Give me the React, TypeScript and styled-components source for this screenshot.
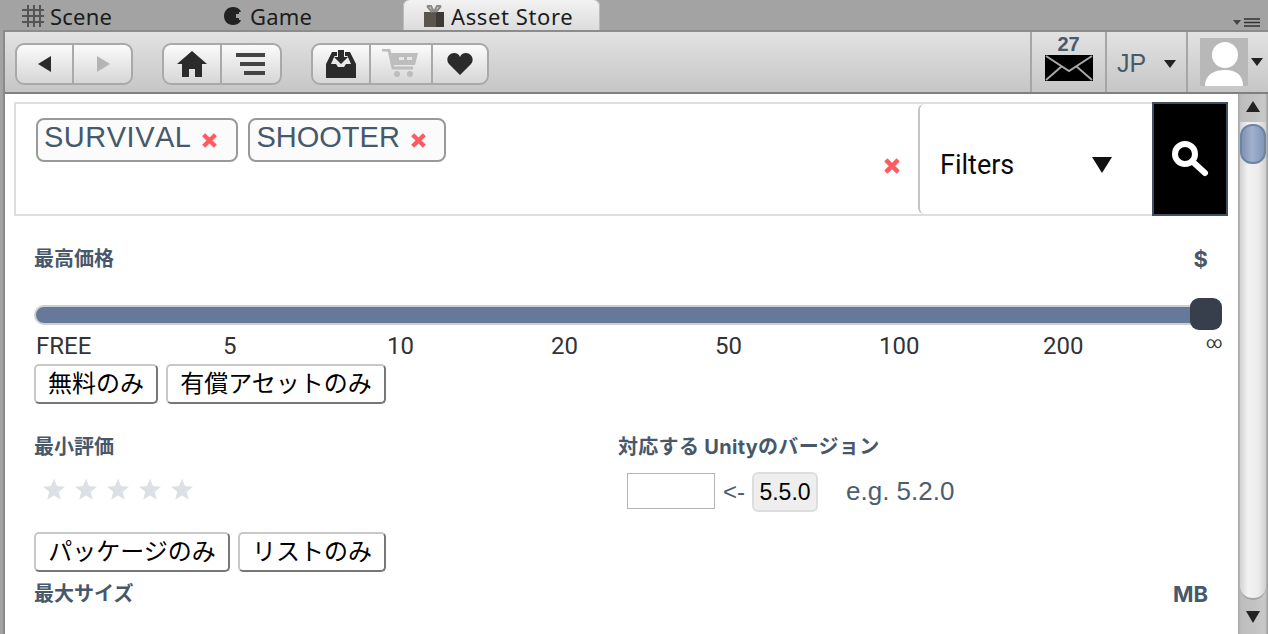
import styled, { createGlobalStyle } from "styled-components";

const Global = createGlobalStyle`
  html, body { margin: 0; padding: 0; }
  body { width: 1268px; height: 634px; overflow: hidden; background: #a3a3a3; font-family: "Roboto", "Noto Sans CJK JP", sans-serif; }
  * { box-sizing: border-box; }
`;

const Page = styled.div`
  width: 1268px;
  height: 634px;
  display: flex;
  flex-direction: column;
  overflow: hidden;
`;

const TabBar = styled.div`
  height: 30px;
  flex: none;
  display: flex;
  align-items: flex-end;
  position: relative;
  font-family: "Noto Sans", sans-serif;
  font-size: 22px;
  color: #1c1c1c;
`;

const Tab = styled.div<{ $w: number; $active?: boolean; $pad: number }>`
  width: ${(p) => p.$w}px;
  height: 30px;
  padding-left: ${(p) => p.$pad}px;
  display: flex;
  align-items: center;
  gap: 6px;
  letter-spacing: ${(p) => (p.$active ? 0.6 : 0.2)}px;
  padding-top: 2px;
  border-radius: 6px 6px 0 0;
  background: ${(p) => (p.$active ? "linear-gradient(#f2f2f2, #dcdcdc)" : "transparent")};
  box-shadow: ${(p) => (p.$active ? "inset 1px 0 #bbb, inset -1px 0 #bbb" : "none")};
`;

const TabMenu = styled.svg`
  position: absolute;
  right: 6px;
  top: 18px;
`;

const Window = styled.div`
  flex: 1;
  margin-left: 3px;
  display: flex;
  flex-direction: column;
  border-left: 2px solid #8a8a8a;
  min-height: 0;
`;

const Toolbar = styled.div`
  height: 64px;
  flex: none;
  display: flex;
  align-items: stretch;
  padding-left: 10px;
  background: linear-gradient(#e2e2e2, #c6c6c6);
  border-top: 2px solid #8c8c8c;
  border-bottom: 2px solid #808080;
`;

const ButtonGroup = styled.div<{ $gap: number }>`
  display: flex;
  height: 42px;
  margin-top: 11px;
  margin-right: ${(p) => p.$gap}px;
  border: 2px solid #a9a9a9;
  border-radius: 9px;
  background: linear-gradient(#fbfbfb, #d6d6d6);
`;

const ToolButton = styled.div<{ $w: number; $divider?: boolean }>`
  width: ${(p) => p.$w}px;
  display: flex;
  align-items: center;
  justify-content: center;
  border-right: ${(p) => (p.$divider ? "2px solid #a9a9a9" : "none")};
`;

const ToolbarRight = styled.div`
  margin-left: auto;
  display: flex;
  align-items: stretch;
  color: #48596c;
`;

const ToolCell = styled.div<{ $w: number }>`
  width: ${(p) => p.$w}px;
  border-left: 2px solid #a6a6a6;
  display: flex;
  align-items: center;
  justify-content: center;
  gap: 4px;
`;

const MailCell = styled(ToolCell)`
  flex-direction: column;
  gap: 2px;
  padding-bottom: 8px;
`;

const MailCount = styled.span`
  font: bold 20px/18px "Liberation Sans", sans-serif;
`;

const LangCell = styled(ToolCell)`
  padding-top: 3px;
`;

const Lang = styled.span`
  font: 25px "Liberation Sans", sans-serif;
  margin-right: 14px;
`;

const AvatarCell = styled(ToolCell)`
  justify-content: flex-start;
  padding-left: 12px;
  gap: 3px;
`;

const Avatar = styled.div`
  width: 48px;
  height: 48px;
  background: #b8b8b8;
  overflow: hidden;
`;

const Body = styled.div`
  flex: 1;
  display: flex;
  min-height: 0;
  background: #fff;
`;

const Content = styled.div`
  flex: 1;
  min-width: 0;
  padding: 8px 10px 0 9px;
  overflow: hidden;
`;

const SearchBar = styled.div`
  height: 114px;
  display: flex;
  border: 2px solid #dedede;
  border-right: none;
`;

const TagArea = styled.div`
  flex: 1;
  position: relative;
  display: flex;
  align-items: flex-start;
  gap: 10px;
  padding: 14px 0 0 20px;
`;

const Tag = styled.div<{ $spread?: number }>`
  height: 44px;
  padding: 0 0 6px 6px;
  display: flex;
  align-items: center;
  border: 2px solid #999;
  border-radius: 8px;
  background: #fbfbfb;
  color: #46586b;
  font: 29px "Liberation Sans", sans-serif;
  font-kerning: none;
  letter-spacing: ${(p) => p.$spread ?? 0}px;
`;

const TagClear = styled.div<{ $left: number; $right: number }>`
  margin: 7px ${(p) => p.$right}px 0 ${(p) => p.$left}px;
`;

const ClearAll = styled.div`
  position: absolute;
  right: 17px;
  top: 53px;
`;

const FilterSelect = styled.div`
  width: 234px;
  display: flex;
  align-items: center;
  justify-content: space-between;
  padding: 12px 40px 0 20px;
  border-left: 2px solid #c4c4c4;
  border-radius: 6px 0 0 6px;
  font-size: 27px;
  color: #0a0a0a;
`;

const SearchButton = styled.div`
  width: 76px;
  height: 114px;
  margin: -2px 0;
  display: flex;
  align-items: center;
  justify-content: center;
  background: #000;
  border: 2px solid #3f5163;
`;

const LabelRow = styled.div<{ $mt: number }>`
  margin-top: ${(p) => p.$mt}px;
  padding: 0 20px;
  display: flex;
  justify-content: space-between;
  height: 26px;
  line-height: 26px;
`;

const Label = styled.span`
  font: bold 20px/26px "Inter", "Noto Sans CJK JP", sans-serif;
  color: #47586b;
`;

const Unit = styled(Label)`
  font-size: 22px;
`;

const VersionLabel = styled(Label)`
  letter-spacing: 0.3px;
`;

const Slider = styled.div`
  position: relative;
  margin: 33px 6px 0 20px;
  height: 20px;
  border: 2px solid #cfcfcf;
  border-radius: 10px;
  background: #67799a;
`;

const Thumb = styled.div`
  position: absolute;
  right: -2px;
  top: -9px;
  width: 32px;
  height: 32px;
  border-radius: 9px;
  background: #373f4d;
`;

const Ticks = styled.div`
  display: flex;
  margin: 6px 0 0 22px;
  height: 30px;
  font-size: 24px;
  line-height: 30px;
  color: #333;
`;

const Tick = styled.span<{ $w: number }>`
  width: ${(p) => p.$w}px;
  flex: none;
`;

const InfinityTick = styled(Tick)`
  font-size: 16px;
  line-height: 24px;
`;

const ButtonRow = styled.div<{ $mt: number }>`
  display: flex;
  gap: 8px;
  margin: ${(p) => p.$mt}px 0 0 20px;
`;

const PlainButton = styled.div<{ $w: number }>`
  width: ${(p) => p.$w}px;
  height: 40px;
  padding-bottom: 5px;
  display: flex;
  align-items: center;
  justify-content: center;
  border: 2px solid;
  border-color: #c8c8c8 #777 #777 #c8c8c8;
  border-radius: 5px;
  font: 24px "Noto Sans CJK JP", sans-serif;
  color: #000;
  white-space: nowrap;
`;

const Columns = styled.div`
  display: flex;
  margin-top: 30px;
  height: 95px;
`;

const RatingColumn = styled.div`
  width: 604px;
  padding-left: 20px;
`;

const Stars = styled.div`
  display: flex;
  gap: 8px;
  margin: 17px 0 0 8px;
`;

const VersionColumn = styled.div`
  flex: 1;
`;

const VersionRow = styled.div`
  display: flex;
  align-items: center;
  margin: 12px 0 0 9px;
  color: #4b5d70;
  font: 24px "Liberation Sans", sans-serif;
`;

const VersionInput = styled.div`
  width: 88px;
  height: 36px;
  border: 1px solid #b5b5b5;
  margin: 0 8px 2px 0;
`;

const VersionChip = styled.div`
  width: 66px;
  height: 40px;
  margin: 0 28px 0 7px;
  display: flex;
  align-items: center;
  justify-content: center;
  background: #eee;
  border: 2px solid #ddd;
  border-radius: 6px;
  color: #000;
  font-size: 23px;
`;

const Example = styled.span`
  font-size: 26px;
  margin-bottom: 2px;
`;

const ScrollBar = styled.div`
  width: 30px;
  flex: none;
  position: relative;
  display: flex;
  flex-direction: column;
  align-items: center;
  background: linear-gradient(90deg, #a8a8a8, #bdbdbd 10%, #c8c8c8 90%, #9a9a9a);
`;

const ScrollArrow = styled.svg<{ $h: number }>`
  flex: none;
  height: ${(p) => p.$h}px;
`;

const ScrollTrack = styled.div`
  flex: 1;
  width: 26px;
  border-radius: 0 0 13px 13px;
  background: linear-gradient(90deg, #d2d2d2, #f2f2f2 30%, #ececec 70%, #d0d0d0);
  border-bottom: 2px solid #a4a4a4;
`;

const ScrollThumb = styled.div`
  position: absolute;
  left: 2px;
  top: 30px;
  width: 26px;
  height: 40px;
  border-radius: 12px;
  border: 2px solid #6f83a3;
  background: linear-gradient(90deg, #7f93b5, #a0b1cc 45%, #8296b8);
`;

const Cross = ({ size = 17 }: { size?: number }) => (
  <svg width={size} height={size} viewBox="0 0 16 16" style={{ display: "block" }}>
    <path d="M2.500 2.500 13.500 13.500M13.500 2.500 2.500 13.500" stroke="#ff5a5f" strokeWidth="4" />
  </svg>
);

const Star = () => (
  <svg width="24" height="24" viewBox="0 0 24 23" style={{ display: "block" }}>
    <path d="M12 1l3 7.600 8 .6-6.200 5.100 2 8-6.800-4.300-6.800 4.300 2-8L1 9.200l8-.6z" fill="#dde0e4" />
  </svg>
);

export default function App() {
  return (
    <Page>
      <Global />
      <TabBar>
        <Tab $w={216} $pad={22}>
          <svg width="22" height="22" viewBox="0 0 22 22">
            <path d="M6 0v22M12 0v22M18 0v22M0 5h22M0 11h22M0 17h22" stroke="#555" strokeWidth="2" />
          </svg>
          Scene
        </Tab>
        <Tab $w={187} $pad={8}>
          <svg width="20" height="18" viewBox="0 0 20 18">
            <path d="M9 0C3.500 0 0 4 0 9s3.500 9 9 9c3 0 5.500-1 7-3l1-2h-2v-2h-3V7h3V5h2l-1-2c-1.500-2-4-3-7-3z" fill="#222" />
          </svg>
          Game
        </Tab>
        <Tab $w={197} $pad={20} $active>
          <svg width="22" height="22" viewBox="0 0 22 22">
            <path d="M1 7h20v15H1z" fill="#5b5550" />
            <path d="M13 7h8v15h-8z" fill="#3e3a36" />
            <path d="M4 1l5 6M18 1l-5 6M4 1h4l3 6M18 1h-4l-3 6" fill="none" stroke="#8a8a8a" strokeWidth="2" />
          </svg>
          Asset Store
        </Tab>
        <TabMenu width="30" height="10" viewBox="0 0 30 10">
          <path d="M1 2h8l-4 5z" fill="#444" />
          <path d="M12 1h16M12 4.500h16M12 8h16" stroke="#333" strokeWidth="1.500" />
        </TabMenu>
      </TabBar>
      <Window>
        <Toolbar>
          <ButtonGroup $gap={29}>
            <ToolButton $w={57} $divider>
              <svg width="16" height="16" viewBox="0 0 16 16"><path d="M14 0v16L1 8z" fill="#2b2b2b" /></svg>
            </ToolButton>
            <ToolButton $w={57}>
              <svg width="16" height="16" viewBox="0 0 16 16"><path d="M2 0v16l13-8z" fill="#b4b4b4" /></svg>
            </ToolButton>
          </ButtonGroup>
          <ButtonGroup $gap={29}>
            <ToolButton $w={58} $divider>
              <svg width="30" height="26" viewBox="0 0 30 26">
                <path d="M15 0 0 13h5v13h7v-8h6v8h7V13h5z" fill="#2b2b2b" />
              </svg>
            </ToolButton>
            <ToolButton $w={58}>
              <svg width="30" height="22" viewBox="0 0 30 22">
                <path d="M0 2h29M4 11h25M8 20h21" stroke="#444" strokeWidth="4" />
              </svg>
            </ToolButton>
          </ButtonGroup>
          <ButtonGroup $gap={0}>
            <ToolButton $w={58} $divider>
              <svg width="30" height="28" viewBox="0 0 30 28">
                <path d="M0 14 6 2h5v4H8.500L5 14h5l2 3h6l2-3h5L21.500 6H19V2h5l6 12v14H0z" fill="#2b2b2b" />
                <path d="M12 0h6v7h4l-7 7-7-7h4z" fill="#2b2b2b" />
              </svg>
            </ToolButton>
            <ToolButton $w={62} $divider>
              <svg width="38" height="30" viewBox="0 0 38 30">
                <path d="M0 1h7l4 18h20" fill="none" stroke="#bdbdbd" strokeWidth="3" />
                <path d="M9 4h27l-3 12H11z" fill="#bdbdbd" />
                <path d="M17 8h5v3h-5zM25 8h5v3h-5z" fill="#e6e6e6" />
                <circle cx="15" cy="25" r="3" fill="#bdbdbd" />
                <circle cx="28" cy="25" r="3" fill="#bdbdbd" />
              </svg>
            </ToolButton>
            <ToolButton $w={54}>
              <svg width="26" height="22" viewBox="0 0 26 22">
                <path d="M13 22 2 11C-2 6 2 0 7 0c3 0 5 1.500 6 4 1-2.500 3-4 6-4 5 0 9 6 5 11z" fill="#2b2b2b" />
              </svg>
            </ToolButton>
          </ButtonGroup>
          <ToolbarRight>
            <MailCell $w={75}>
              <MailCount>27</MailCount>
              <svg width="48" height="26" viewBox="0 0 48 26">
                <rect width="48" height="26" fill="#000" />
                <path d="M1 1l23 15L47 1M1 25l16-14M47 25 31 11" fill="none" stroke="#a8a8a8" strokeWidth="2" />
              </svg>
            </MailCell>
            <LangCell $w={81}>
              <Lang>JP</Lang>
              <svg width="12" height="8" viewBox="0 0 12 8"><path d="M0 0h12L6 8z" fill="#222" /></svg>
            </LangCell>
            <AvatarCell $w={82}>
              <Avatar>
                <svg width="48" height="48" viewBox="0 0 48 48" style={{ display: "block" }}>
                  <circle cx="25" cy="17" r="13" fill="#fff" />
                  <path d="M5 48c0-12 10-16 20-16s18 4 18 16z" fill="#fff" />
                </svg>
              </Avatar>
              <svg width="12" height="8" viewBox="0 0 12 8"><path d="M0 0h12L6 8z" fill="#222" /></svg>
            </AvatarCell>
          </ToolbarRight>
        </Toolbar>
        <Body>
          <Content>
            <SearchBar>
              <TagArea>
                <Tag $spread={0.5}>SURVIVAL<TagClear $left={10} $right={18}><Cross /></TagClear></Tag>
                <Tag>SHOOTER<TagClear $left={10} $right={17}><Cross /></TagClear></Tag>
                <ClearAll><Cross size={18} /></ClearAll>
              </TagArea>
              <FilterSelect>
                Filters
                <svg width="20" height="16" viewBox="0 0 20 16"><path d="M0 0h20L10 16z" fill="#111" /></svg>
              </FilterSelect>
              <SearchButton>
                <svg width="38" height="38" viewBox="0 0 38 38">
                  <circle cx="14" cy="14" r="10" fill="none" stroke="#fff" strokeWidth="6" />
                  <path d="M22 22 34 33" stroke="#fff" strokeWidth="6" strokeLinecap="round" />
                </svg>
              </SearchButton>
            </SearchBar>
            <LabelRow $mt={30}>
              <Label>最高価格</Label>
              <Unit>$</Unit>
            </LabelRow>
            <Slider><Thumb /></Slider>
            <Ticks>
              <Tick $w={187}>FREE</Tick>
              <Tick $w={164}>5</Tick>
              <Tick $w={164}>10</Tick>
              <Tick $w={164}>20</Tick>
              <Tick $w={164}>50</Tick>
              <Tick $w={164}>100</Tick>
              <Tick $w={163}>200</Tick>
              <InfinityTick $w={20}>∞</InfinityTick>
            </Ticks>
            <ButtonRow $mt={3}>
              <PlainButton $w={124}>無料のみ</PlainButton>
              <PlainButton $w={220}>有償アセットのみ</PlainButton>
            </ButtonRow>
            <Columns>
              <RatingColumn>
                <Label>最小評価</Label>
                <Stars><Star /><Star /><Star /><Star /><Star /></Stars>
              </RatingColumn>
              <VersionColumn>
                <VersionLabel>対応する Unityのバージョン</VersionLabel>
                <VersionRow>
                  <VersionInput />
                  {"<-"}
                  <VersionChip>5.5.0</VersionChip>
                  <Example>e.g. 5.2.0</Example>
                </VersionRow>
              </VersionColumn>
            </Columns>
            <ButtonRow $mt={3}>
              <PlainButton $w={196}>パッケージのみ</PlainButton>
              <PlainButton $w={148}>リストのみ</PlainButton>
            </ButtonRow>
            <LabelRow $mt={9}>
              <Label>最大サイズ</Label>
              <Unit>MB</Unit>
            </LabelRow>
          </Content>
          <ScrollBar>
            <ScrollArrow $h={28} width="30" viewBox="0 0 30 28">
              <path d="M8 18 15 7l7 11z" fill="#222" />
            </ScrollArrow>
            <ScrollTrack />
            <ScrollArrow $h={34} width="30" viewBox="0 0 30 34">
              <path d="M8 11h14l-7 12z" fill="#222" />
            </ScrollArrow>
            <ScrollThumb />
          </ScrollBar>
        </Body>
      </Window>
    </Page>
  );
}
